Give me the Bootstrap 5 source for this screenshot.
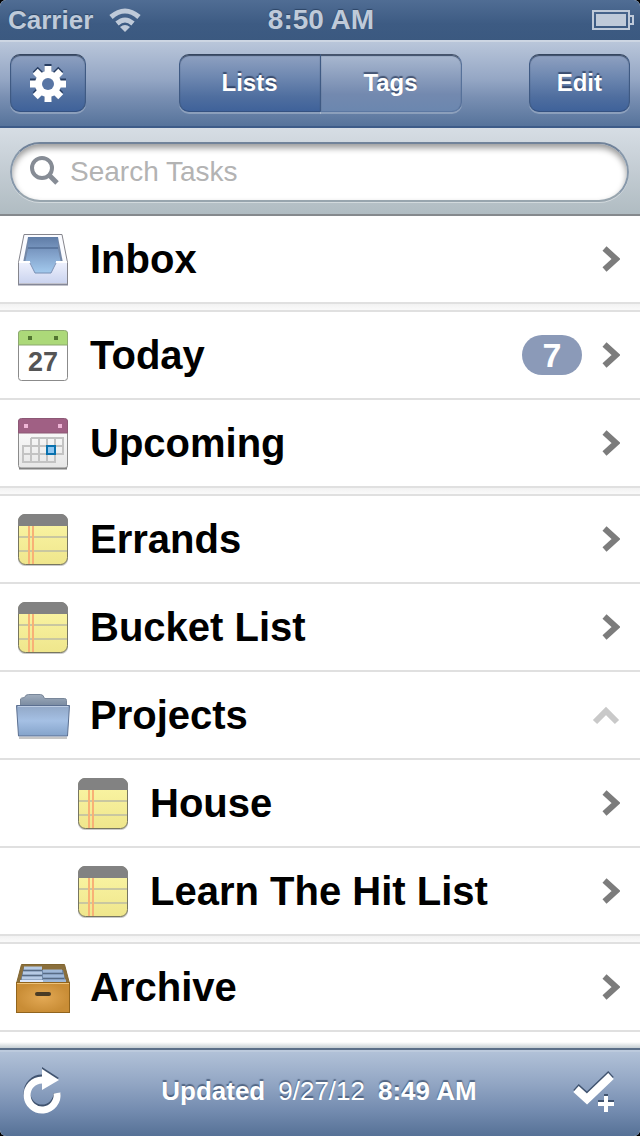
<!DOCTYPE html>
<html lang="en">
<head>
<meta charset="utf-8">
<meta name="viewport" content="width=device-width, initial-scale=1">
<title>Lists</title>
<link href="https://cdn.jsdelivr.net/npm/bootstrap@5.3.0/dist/css/bootstrap.min.css" rel="stylesheet">
<style>
body { background: #000; font-family: "Liberation Sans", Arial, sans-serif; color: #000; }
.shell { background: #fff; border-radius: 6px; overflow: hidden; }
.bar3 { display: grid; grid-template-columns: 1fr auto 1fr; align-items: center; }
.bar3 > :last-child { justify-self: end; }

.statusbar { height: 40px; padding: 0 6px 0 8px; background: linear-gradient(#506d94, #3d5b83 60%, #3b5980); color: #bfcad9; font-weight: 700; line-height: 40px; text-shadow: 0 -1px 1px #2d4566; }
.carrier { font-size: 26px; }
.clock { font-size: 28px; }

.topbar { height: 88px; padding: 0 10px 2px; border-top: 2px solid #cdd6e3; border-bottom: 2px solid #3d5b88; background: linear-gradient(#b9c6da, #94a6c4 45%, #7a90b3 65%, #56739b); }
.ios-btn { height: 58px; padding: 0 27px; border: 1px solid; border-color: #36465f #3f5a83 #355281; border-radius: 10px; background: linear-gradient(#8fa1c1, #6d87b0 40%, #4f6e9f 75%, #3f629a); box-shadow: inset 0 1px 1px #3b4c68, 0 2px 0 rgba(255,255,255,.25); color: #fff; font-size: 24px; font-weight: 700; line-height: 54px; text-shadow: 0 -2px 1px rgba(20,35,65,.6); }
.ios-btn:hover, .ios-btn:focus { color: #fff; border-color: #36465f #3f5a83 #355281; }
.gear-btn { width: 76px; padding: 0; }
.segment { width: 142px; padding: 0; }
.segment.off { background: linear-gradient(#a9b8d0, #8a9dbd 40%, #7389af 70%, #6b87af); border-color: #46546b #56719a #5c78a2 #3f5a83; }

.searchbar { height: 88px; padding: 2px 11px 0 10px; border-bottom: 2px solid #85898d; background: linear-gradient(#d6dde4, #c3ccd3 50%, #b0bcc2); }
.search-pill { height: 60px; padding: 0 20px 0 18px; border: 2px solid; border-color: #71839a #8798aa #98a5ae; border-radius: 30px; background: #fff; box-shadow: inset 0 4px 6px rgba(0,0,0,.4), 0 1px 0 rgba(255,255,255,.4); }
.search-pill input { border: 0; outline: 0; background: none; font-size: 28px; line-height: 40px; color: #333; padding: 0; }
.search-pill input::placeholder { color: #b3b3b3; opacity: 1; }

.rows { list-style: none; margin: 0; padding: 0; }
.line { height: 88px; padding: 0 20px 0 16px; gap: 20px; border: 0; border-bottom: 2px solid #e0e0e0; background: #fff; color: #000; font-size: 40px; font-weight: 700; line-height: 48px; text-decoration: none; text-align: left; }
.rows .rows .line { padding-left: 76px; }
.divider { height: 8px; background: linear-gradient(#f2f2f2, #fafafa); border-bottom: 2px solid #e0e0e0; }
.pill-count { width: 60px; height: 40px; border-radius: 20px; background: #8b9ab8; color: #fff; font-size: 34px; line-height: 40px; text-align: center; }

.list-area { min-height: 832px; background: linear-gradient(#fff calc(100% - 6px), #c5ced3); }
.bottombar { height: 88px; padding: 0 24px 4px 22px; border-top: 2px solid #5b6f88; background: linear-gradient(#b3c3d9, #91a5c3 40%, #748cb0 70%, #567196); box-shadow: inset 0 2px 0 #bccadd; color: #fff; font-size: 26px; text-shadow: 0 -2px 1px rgba(40,60,90,.6); }
.updated { gap: 13px; line-height: 32px; }
.tool { border: 0; background: none; padding: 0; }
</style>
</head>
<body>
<svg class="position-absolute" width="0" height="0" aria-hidden="true">
  <defs>
    <linearGradient id="yellow" x2="0" y2="1"><stop stop-color="#fbf6a6"/><stop offset="1" stop-color="#efe68c"/></linearGradient>
    <linearGradient id="front" x2="0" y2="1"><stop stop-color="#eef1fd"/><stop offset="1" stop-color="#cbd4ef"/></linearGradient>
    <linearGradient id="tray" x2="0" y2="1"><stop stop-color="#5f7ca6"/><stop offset=".45" stop-color="#809fc8"/><stop offset="1" stop-color="#a3caee"/></linearGradient>
    <linearGradient id="fold" x2="0" y2="1"><stop stop-color="#91a7c6"/><stop offset=".5" stop-color="#a5c0e4"/><stop offset="1" stop-color="#84a3ca"/></linearGradient>
    <linearGradient id="back" x2="0" y2="1"><stop stop-color="#a0adbd"/><stop offset="1" stop-color="#71839b"/></linearGradient>
    <linearGradient id="page" x2="0" y2="1"><stop stop-color="#fff"/><stop offset="1" stop-color="#e6e6e6"/></linearGradient>
    <radialGradient id="wood"><stop stop-color="#e3a955"/><stop offset="1" stop-color="#c98d36"/></radialGradient>
  </defs>
  <symbol id="note" viewBox="0 0 54 54">
    <rect x="2" y="4" width="50" height="50" rx="7" fill="#c9c9c9"/>
    <rect x="2.500" y="2.500" width="49" height="50" rx="7" fill="url(#yellow)" stroke="#77765f"/>
    <path d="M2 14V9a7 7 0 0 1 7-7h36a7 7 0 0 1 7 7v5z" fill="#828282"/>
    <path d="M3 25h48M3 39h48" stroke="#c9c7a0" stroke-width="2"/>
    <path d="M13 14v38M17 14v38" stroke="#f8b176" stroke-width="2"/>
  </symbol>
  <symbol id="chev" viewBox="0 0 18 28"><path d="M2.500 3.500 14 14 2.500 24.500" fill="none" stroke="#7c7c7c" stroke-width="6"/></symbol>
</svg>

<div class="shell d-flex flex-column min-vh-100">
  <div class="statusbar bar3">
    <div class="d-flex align-items-center gap-3">
      <span class="carrier">Carrier</span>
      <svg width="32" height="24" viewBox="0 0 32 24" fill="none" stroke="#bfcad9" stroke-width="5" role="img" aria-label="Wi-Fi"><path d="M2 9q14-12 28 0M8 15.500q8-7 16 0" /><path d="M16 24l-5-5q5-4 10 0z" fill="#bfcad9" stroke="none"/></svg>
    </div>
    <span class="clock">8:50 AM</span>
    <svg width="42" height="20" viewBox="0 0 42 20" role="img" aria-label="Battery full"><rect x="1" y="1" width="36" height="18" fill="none" stroke="#bfcad9" stroke-width="2"/><rect x="4" y="4" width="30" height="12" fill="#bfcad9"/><path d="M38 6h3v8h-3" fill="none" stroke="#bfcad9" stroke-width="2"/></svg>
  </div>

  <header class="topbar bar3">
    <div>
      <button type="button" class="btn ios-btn gear-btn d-flex align-items-center justify-content-center" aria-label="Settings">
        <svg width="38" height="40" viewBox="0 0 38 40">
          <g transform="translate(19 19)" fill="#263c61"><path d="M-3.500-18h7v36h-7z"/><path d="M-3.500-18h7v36h-7z" transform="rotate(45)"/><path d="M-3.500-18h7v36h-7z" transform="rotate(90)"/><path d="M-3.500-18h7v36h-7z" transform="rotate(135)"/></g>
          <g transform="translate(19 21)" fill="#fff"><path d="M-3.500-18h7v36h-7z"/><path d="M-3.500-18h7v36h-7z" transform="rotate(45)"/><path d="M-3.500-18h7v36h-7z" transform="rotate(90)"/><path d="M-3.500-18h7v36h-7z" transform="rotate(135)"/><circle r="13"/><circle r="6" fill="#5875a4"/></g>
        </svg>
      </button>
    </div>
    <div class="btn-group" role="group" aria-label="View">
      <button type="button" class="btn ios-btn segment" aria-pressed="true">Lists</button>
      <button type="button" class="btn ios-btn segment off" aria-pressed="false">Tags</button>
    </div>
    <button type="button" class="btn ios-btn">Edit</button>
  </header>

  <form class="searchbar d-flex align-items-center" role="search">
    <div class="search-pill d-flex align-items-center flex-grow-1">
      <label for="q" class="d-flex me-2" aria-label="Search Tasks"><svg width="32" height="32" viewBox="0 0 32 32" fill="none" stroke="#868c95"><circle cx="12" cy="12" r="10" stroke-width="4"/><path d="m19 19 8 8" stroke-width="5"/></svg></label>
      <input id="q" class="w-100" type="text" placeholder="Search Tasks">
    </div>
  </form>

  <main class="list-area flex-grow-1">
    <ul class="rows">
      <li><a href="#inbox" class="line d-flex align-items-center">
        <svg width="54" height="54" viewBox="0 0 54 54">
          <path d="M8 2.500h38l5.500 28v22h-49v-22z" fill="#fafbff" stroke="#85858c"/>
          <path d="M12 5h30l5 26H7z" fill="#7388a8"/>
          <path d="M12 5h30v12l3 14h-5l-5 10H19l-5-10H9l3-14z" fill="url(#tray)"/>
          <path d="M12 16h30" stroke="#405b83"/>
          <path d="M3 30h11l5 11h16l5-11h11v21H3z" fill="url(#front)"/>
          <path d="M14 31l5 10h16l5-10" fill="none" stroke="#778eb3"/>
          <path d="M3 30h11M40 30h11" stroke="#fff" stroke-width="2"/>
          <path d="M2 52.500h50" stroke="#858898" stroke-width="2"/>
        </svg>
        <span class="flex-grow-1">Inbox</span><svg width="18" height="28"><use href="#chev"/></svg></a></li>
      <li class="divider" aria-hidden="true"></li>
      <li><a href="#today" class="line d-flex align-items-center">
        <svg width="54" height="54" viewBox="0 0 54 54">
          <rect x="2.500" y="3.500" width="49" height="49" rx="3" fill="#fff" stroke="#8b8b8b"/>
          <path d="M2.500 17V5q0-2.500 3-2.500h43q3 0 3 2.500v12z" fill="#acd979" stroke="#8da970"/>
          <path d="M12 8h4v4h-4zM38 8h4v4h-4z" fill="#517530"/>
          <text x="27" y="43" text-anchor="middle" font-size="27" font-weight="700" fill="#555">27</text>
        </svg>
        <span class="flex-grow-1">Today</span><span class="pill-count">7</span><svg width="18" height="28"><use href="#chev"/></svg></a></li>
      <li><a href="#upcoming" class="line d-flex align-items-center">
        <svg width="54" height="54" viewBox="0 0 54 54">
          <rect x="2.500" y="3.500" width="49" height="49" rx="3" fill="url(#page)" stroke="#8b8b8b"/>
          <path d="M3 52.500h48" stroke="#808080" stroke-width="2"/>
          <path d="M2.500 17V5q0-2.500 3-2.500h43q3 0 3 2.500v12z" fill="#a06084" stroke="#8c5875"/>
          <path d="M8 8h4v4H8zM42 8h4v4h-4z" fill="#efb5d6"/>
          <path d="M15 22h32v16H7v8h32V22M7 38v-8h40M15 22v24M23 22v24M31 22v24" fill="none" stroke="#c3c3c3" stroke-width="2"/>
          <rect x="31" y="30" width="8" height="8" fill="#8fc6f1" stroke="#0871ae" stroke-width="2"/>
        </svg>
        <span class="flex-grow-1">Upcoming</span><svg width="18" height="28"><use href="#chev"/></svg></a></li>
      <li class="divider" aria-hidden="true"></li>
      <li><a href="#errands" class="line d-flex align-items-center"><svg width="54" height="54"><use href="#note"/></svg><span class="flex-grow-1">Errands</span><svg width="18" height="28"><use href="#chev"/></svg></a></li>
      <li><a href="#bucket" class="line d-flex align-items-center"><svg width="54" height="54"><use href="#note"/></svg><span class="flex-grow-1">Bucket List</span><svg width="18" height="28"><use href="#chev"/></svg></a></li>
      <li>
        <button type="button" class="line d-flex align-items-center w-100" data-bs-toggle="collapse" data-bs-target="#projects" aria-expanded="true" aria-controls="projects">
          <svg width="54" height="54" viewBox="0 0 54 54">
            <path d="M4.500 20V11q0-1 4-1.500 1-3 4-3h12q3 0 4 4h20q2 0 2 2V20z" fill="url(#back)" stroke="#79879a"/>
            <path d="M3 49h48v2H3z" fill="#c6c6c6"/>
            <path d="M.5 17.500h53L51.500 48h-49z" fill="url(#fold)" stroke="#5b6f90"/>
            <path d="M2 18.500h50" stroke="#bccce3"/>
          </svg>
          <span class="flex-grow-1">Projects</span>
          <svg width="28" height="20" viewBox="0 0 28 20"><path d="M3 17 14 6l11 11" fill="none" stroke="#c9c9c9" stroke-width="6"/></svg>
        </button>
        <ul class="rows collapse show" id="projects">
          <li><a href="#house" class="line d-flex align-items-center"><svg width="54" height="54"><use href="#note"/></svg><span class="flex-grow-1">House</span><svg width="18" height="28"><use href="#chev"/></svg></a></li>
          <li><a href="#learn" class="line d-flex align-items-center"><svg width="54" height="54"><use href="#note"/></svg><span class="flex-grow-1">Learn The Hit List</span><svg width="18" height="28"><use href="#chev"/></svg></a></li>
        </ul>
      </li>
      <li class="divider" aria-hidden="true"></li>
      <li><a href="#archive" class="line d-flex align-items-center">
        <svg width="54" height="54" viewBox="0 0 54 54">
          <path d="M5.500 4.500h43l5 19H.5z" fill="#8a6f3c" stroke="#80652f"/>
          <path d="M8 7h18v3h21l3 13H4z" fill="#7089a9"/>
          <path d="M8 8h18M7 13h19M6 18h20" stroke="#b7cbe4" stroke-width="3"/>
          <path d="M27 11h19M27 16h21M27 21h23" stroke="#9fb8d7" stroke-width="3"/>
          <path d="M4 22h23" stroke="#dce7fa" stroke-width="4"/>
          <path d="M7 10.500h19M6 15.500h20M27 13.500h20M27 18.500h21" stroke="#576b84"/>
          <rect x=".5" y="22.500" width="53" height="30" fill="url(#wood)" stroke="#91641d"/>
          <path d="M1 23.500h52" stroke="#edc47c"/>
          <rect x="19" y="32" width="16" height="4" rx="2" fill="#4a3b25"/>
        </svg>
        <span class="flex-grow-1">Archive</span><svg width="18" height="28"><use href="#chev"/></svg></a></li>
    </ul>
  </main>

  <footer class="bottombar bar3">
    <div>
      <button type="button" class="tool d-flex" aria-label="Refresh"><svg width="40" height="48" viewBox="0 0 40 48">
        <path d="M20 11a15 15 0 1 0 15 15" fill="none" stroke="#40536f" stroke-width="7"/><path d="M20 0l17 11-17 10z" fill="#40536f"/>
        <path d="M20 13a15 15 0 1 0 15 13" fill="none" stroke="#fff" stroke-width="7"/><path d="M20 2l17 11-17 10z" fill="#fff"/></svg></button>
    </div>
    <div class="updated d-flex"><b>Updated</b><span>9/27/12</span><b>8:49 AM</b></div>
    <button type="button" class="tool d-flex" aria-label="Add task"><svg width="44" height="44" viewBox="0 0 44 44">
      <path d="m4 18 11 10L39 5" fill="none" stroke="#40536f" stroke-width="8"/><path d="M32 25h4v6h6v4H26v-4h6z" fill="#40536f"/>
      <path d="m4 20 11 10L39 7" fill="none" stroke="#fff" stroke-width="8"/><path d="M32 27h4v6h6v4h-6v6h-4v-6h-6v-4h6z" fill="#fff"/></svg></button>
  </footer>
</div>
<script src="https://cdn.jsdelivr.net/npm/bootstrap@5.3.0/dist/js/bootstrap.bundle.min.js"></script>
</body>
</html>
